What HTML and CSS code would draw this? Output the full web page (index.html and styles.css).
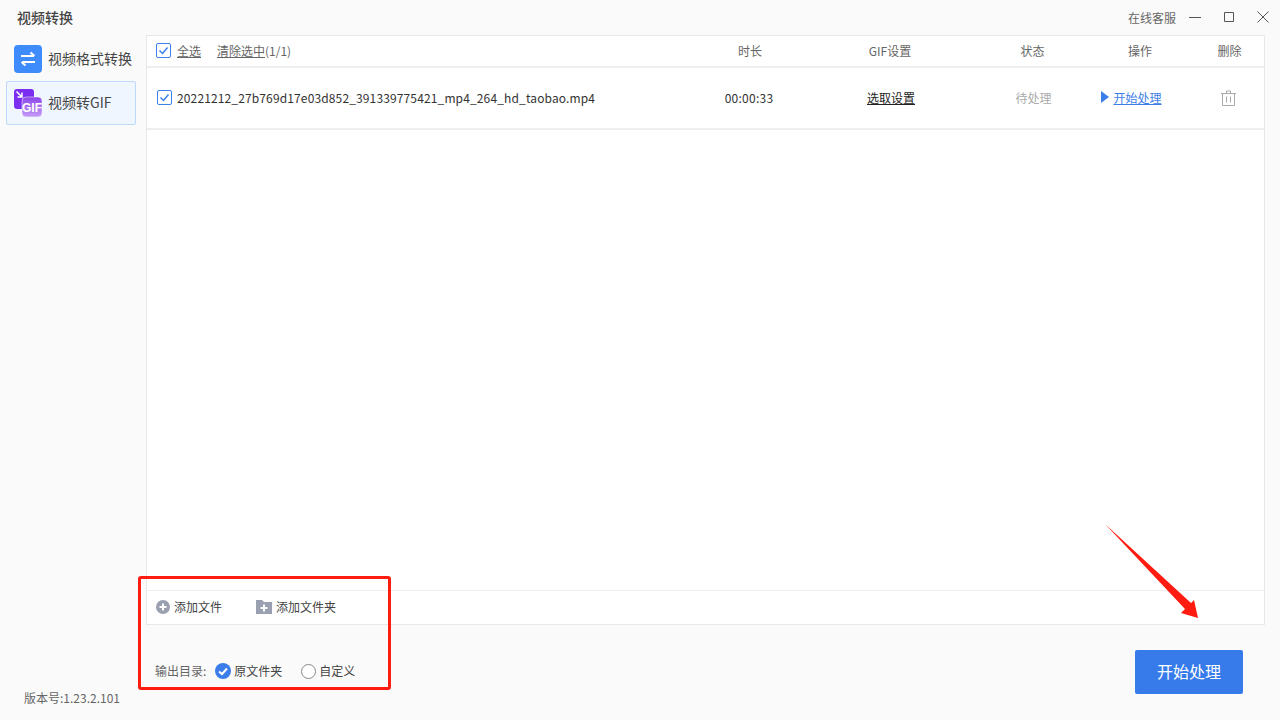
FILE: index.html
```html
<!DOCTYPE html>
<html lang="zh-CN">
<head>
    <meta charset="UTF-8">
    <title>视频转换</title>
    <link rel="stylesheet" href="styles.css">
</head>
<body>
    <div class="app">
        <!-- Title bar -->
        <header class="titlebar">
            <span class="app-title">视频转换</span>
            <span class="service">在线客服</span>
            <svg class="win-btn win-min" width="12" height="12" viewBox="0 0 12 12"><path d="M0 6.500h12" stroke="#555" fill="none"/></svg>
            <svg class="win-btn win-max" width="12" height="12" viewBox="0 0 12 12"><path d="M1.500 1.500h9v9h-9z" stroke="#555" fill="none"/></svg>
            <svg class="win-btn win-close" width="14" height="14" viewBox="0 0 14 14"><path d="M1.500 1.500l11 11M12.500 1.500l-11 11" stroke="#555" fill="none"/></svg>
        </header>

        <div class="content">
            <!-- Sidebar -->
            <aside class="sidebar">
                <div class="side-item">
                    <svg width="28" height="28" viewBox="0 0 28 28">
                        <rect width="28" height="28" rx="4" fill="#3e8bfb"/>
                        <path d="M7 11h13M16.500 7.500l4 3.500M21 17H8M11.500 20.500l-4-3.500" stroke="#fff" stroke-width="2" fill="none"/>
                    </svg>
                    <span class="side-label">视频格式转换</span>
                </div>
                <div class="side-item active">
                    <svg width="28" height="28" viewBox="0 0 28 28">
                        <defs>
                            <linearGradient id="gifFill" x1="0" y1="0" x2="0" y2="1">
                                <stop offset="0" stop-color="#8a45ec"/>
                                <stop offset="1" stop-color="#c59bf5"/>
                            </linearGradient>
                        </defs>
                        <rect width="20" height="20" rx="3" fill="#7a2ff0"/>
                        <path d="M2.500 2.500l5.500 5.500M8 3.500V8H3.500" stroke="#fff" stroke-width="1.500" fill="none"/>
                        <rect x="8" y="8" width="20" height="20" rx="4" fill="url(#gifFill)" stroke="#fff" stroke-width="0.500"/>
                        <text x="18" y="22.500" text-anchor="middle" class="gif-text">GIF</text>
                    </svg>
                    <span class="side-label">视频转GIF</span>
                </div>
                <div class="version">版本号:1.23.2.101</div>
            </aside>

            <main class="main">
                <section class="panel">
                    <div class="grid-row table-head">
                        <div class="name-cell">
                            <span class="check"><svg width="13" height="13" viewBox="0 0 13 13"><path d="M2.500 6.500l3 3 5-6" stroke="#3b82ee" stroke-width="1.500" fill="none"/></svg></span>
                            <a class="head-link">全选</a>
                            <span class="clear"><a class="head-link">清除选中</a>(1/1)</span>
                        </div>
                        <div class="cell">时长</div>
                        <div class="cell">GIF设置</div>
                        <div class="cell">状态</div>
                        <div class="cell">操作</div>
                        <div class="cell">删除</div>
                    </div>
                    <div class="grid-row table-row">
                        <div class="name-cell row-name">
                            <span class="check"><svg width="13" height="13" viewBox="0 0 13 13"><path d="M2.500 6.500l3 3 5-6" stroke="#3b82ee" stroke-width="1.500" fill="none"/></svg></span>
                            <span class="file-name">20221212_27b769d17e03d852_391339775421_mp4_264_hd_taobao.mp4</span>
                        </div>
                        <div class="cell duration">00:00:33</div>
                        <div class="cell pick-cell"><a class="pick">选取设置</a></div>
                        <div class="cell status">待处理</div>
                        <div class="cell action">
                            <svg width="8" height="12" viewBox="0 0 8 12"><path d="M0 0l8 6-8 6z" fill="#3b7de9"/></svg>
                            <a class="start-link">开始处理</a>
                        </div>
                        <div class="cell trash">
                            <svg width="15" height="16" viewBox="0 0 15 16"><path d="M0 3.500h15M5.500 3.500V1h4v2.500M1.500 3.500h12v12h-12zM5.500 6.500v6M9.500 6.500v6" stroke="#aaa" fill="none"/></svg>
                        </div>
                    </div>
                    <div class="add-bar">
                        <span class="add-btn">
                            <svg width="14" height="14" viewBox="0 0 14 14"><circle cx="7" cy="7" r="7" fill="#9aa0b0"/><path d="M3.500 7h7M7 3.500v7" stroke="#fff" stroke-width="2"/></svg>
                            <span class="lifted">添加文件</span>
                        </span>
                        <span class="add-btn">
                            <svg width="16" height="14" viewBox="0 0 16 14"><path d="M0 0h6l2 2h8v12H0z" fill="#9aa0b0"/><path d="M4.500 8h7M8 4.500v7" stroke="#fff" stroke-width="2"/></svg>
                            <span class="lifted">添加文件夹</span>
                        </span>
                    </div>
                </section>

                <div class="bottom">
                    <div class="output">
                        <span class="output-label lifted">输出目录:</span>
                        <svg class="radio" width="16" height="16" viewBox="0 0 16 16"><circle cx="8" cy="8" r="8" fill="#3b7de9"/><path d="M4 8.500l3 2.500 5-5.500" stroke="#fff" stroke-width="2" fill="none"/></svg>
                        <span class="radio-text lifted">原文件夹</span>
                        <span class="radio-empty"></span>
                        <span class="radio-text lifted">自定义</span>
                    </div>
                    <button class="start-btn">开始处理</button>
                </div>
            </main>
        </div>

        <!-- Annotations drawn on the screenshot -->
        <div class="mark-box"></div>
        <svg class="mark-arrow" width="100" height="100" viewBox="0 0 100 100">
            <path d="M0 0L86 79 89 76 93 94 76 89 80 85z" fill="#fe1c10"/>
        </svg>
    </div>
</body>
</html>
```

FILE: styles.css
```css
* {
    box-sizing: border-box;
}

body {
    margin: 0;
    background-color: #fafafa;
    font-family: "Noto Sans CJK SC", "Liberation Sans", sans-serif;
    font-size: 12px;
    color: #333333;
}

a {
    cursor: pointer;
}

/* Noto sits lower in its line box than the original font */
.lifted {
    padding-bottom: 2px;
}

.app {
    position: relative;
    width: 1280px;
    height: 720px;
    overflow: hidden;
    display: flex;
    flex-direction: column;
}

/* Title bar */
.titlebar {
    height: 35px;
    flex-shrink: 0;
    display: flex;
    align-items: center;
    padding: 0 10px 1px 17px;
}

.app-title {
    font-size: 14px;
    font-weight: 500;
    color: #444444;
}

.service {
    margin-left: auto;
    color: #666666;
}

.win-btn {
    display: block;
}

.win-min {
    margin-left: 13px;
}

.win-max {
    margin-left: 22px;
}

.win-close {
    margin-left: 21px;
}

/* Sidebar and main area */
.content {
    flex: 1;
    display: flex;
    min-height: 0;
}

.sidebar {
    width: 146px;
    flex-shrink: 0;
    padding: 2px 10px 0 6px;
    display: flex;
    flex-direction: column;
}

.side-item {
    height: 44px;
    display: flex;
    align-items: center;
    gap: 6px;
    padding-left: 8px;
    font-size: 14px;
    color: #444444;
    white-space: nowrap;
}

.side-item.active {
    height: 44px;
    background-color: #f0f6ff;
    border: 1px solid #bcd8fb;
    border-radius: 2px;
    padding-left: 7px;
}

.side-label {
    padding-bottom: 3px;
}

.gif-text {
    font-family: "Liberation Sans", sans-serif;
    font-size: 12px;
    font-weight: 700;
    fill: #ffffff;
}

.version {
    margin-top: auto;
    margin-bottom: 14px;
    padding-left: 18px;
    color: #666666;
}

.main {
    flex: 1;
    min-width: 0;
    padding-right: 15px;
    display: flex;
    flex-direction: column;
}

.panel {
    height: 590px;
    flex-shrink: 0;
    background-color: #ffffff;
    border: 1px solid #e8e8e8;
    display: flex;
    flex-direction: column;
}

.grid-row {
    display: grid;
    grid-template-columns: 553px 100px 180px 105px 110px 1fr;
    align-items: center;
    border-bottom: 2px solid #eeeeee;
}

.table-head {
    height: 32px;
    padding-bottom: 1px;
    color: #666666;
}

.table-row {
    height: 62px;
    padding-bottom: 2px;
}

.name-cell {
    display: flex;
    align-items: center;
    padding-left: 9px;
}

.row-name {
    padding-left: 10px;
}

.row-name .check {
    margin-right: 5px;
}

.check {
    width: 15px;
    height: 15px;
    margin-right: 6px;
    border: 1px solid #3b82ee;
    border-radius: 2px;
    display: flex;
    align-items: center;
    justify-content: center;
    background-color: #ffffff;
}

.head-link {
    text-decoration: underline;
}

.clear {
    margin-left: 16px;
}

.file-name {
    white-space: nowrap;
    letter-spacing: 0.133px;
}

.cell {
    text-align: center;
}

.duration {
    letter-spacing: 0.25px;
    padding-right: 2px;
}

.pick-cell {
    padding-left: 2px;
}

.pick {
    color: #222222;
    text-decoration: underline;
}

.status {
    color: #aaaaaa;
    padding-left: 2px;
}

.action {
    display: flex;
    align-items: center;
    justify-content: center;
    gap: 4px;
    padding-right: 17px;
}

.start-link {
    color: #3b7de9;
    text-decoration: underline;
}

.trash {
    padding: 4px 3px 0 0;
}

/* Add file bar */
.add-bar {
    margin-top: auto;
    height: 34px;
    border-top: 1px solid #eeeeee;
    display: flex;
    align-items: center;
    gap: 34px;
    padding: 0 0 1px 9px;
}

.add-btn {
    display: flex;
    align-items: center;
    gap: 4px;
    color: #444444;
}

/* Bottom row */
.bottom {
    flex: 1;
    display: flex;
    align-items: flex-start;
    justify-content: space-between;
    padding: 25px 22px 0 9px;
}

.output {
    display: flex;
    align-items: center;
    margin-top: 11px;
    height: 20px;
}

.output-label {
    color: #666666;
    margin-right: 9px;
}

.radio {
    margin-right: 3px;
}

.radio-text {
    color: #444444;
}

.radio-empty {
    width: 15px;
    height: 15px;
    margin: 0 3px 0 19px;
    border: 1px solid #888888;
    border-radius: 50%;
    background-color: #ffffff;
}

.start-btn {
    width: 108px;
    height: 44px;
    padding: 0 0 2px;
    border: none;
    border-radius: 2px;
    background-color: #377bea;
    color: #ffffff;
    font-family: inherit;
    font-size: 16px;
}

/* Annotations */
.mark-box {
    position: absolute;
    left: 138px;
    top: 576px;
    width: 253px;
    height: 114px;
    border: 3px solid #fe1c10;
    border-radius: 3px;
}

.mark-arrow {
    position: absolute;
    left: 1105px;
    top: 524px;
}
```
